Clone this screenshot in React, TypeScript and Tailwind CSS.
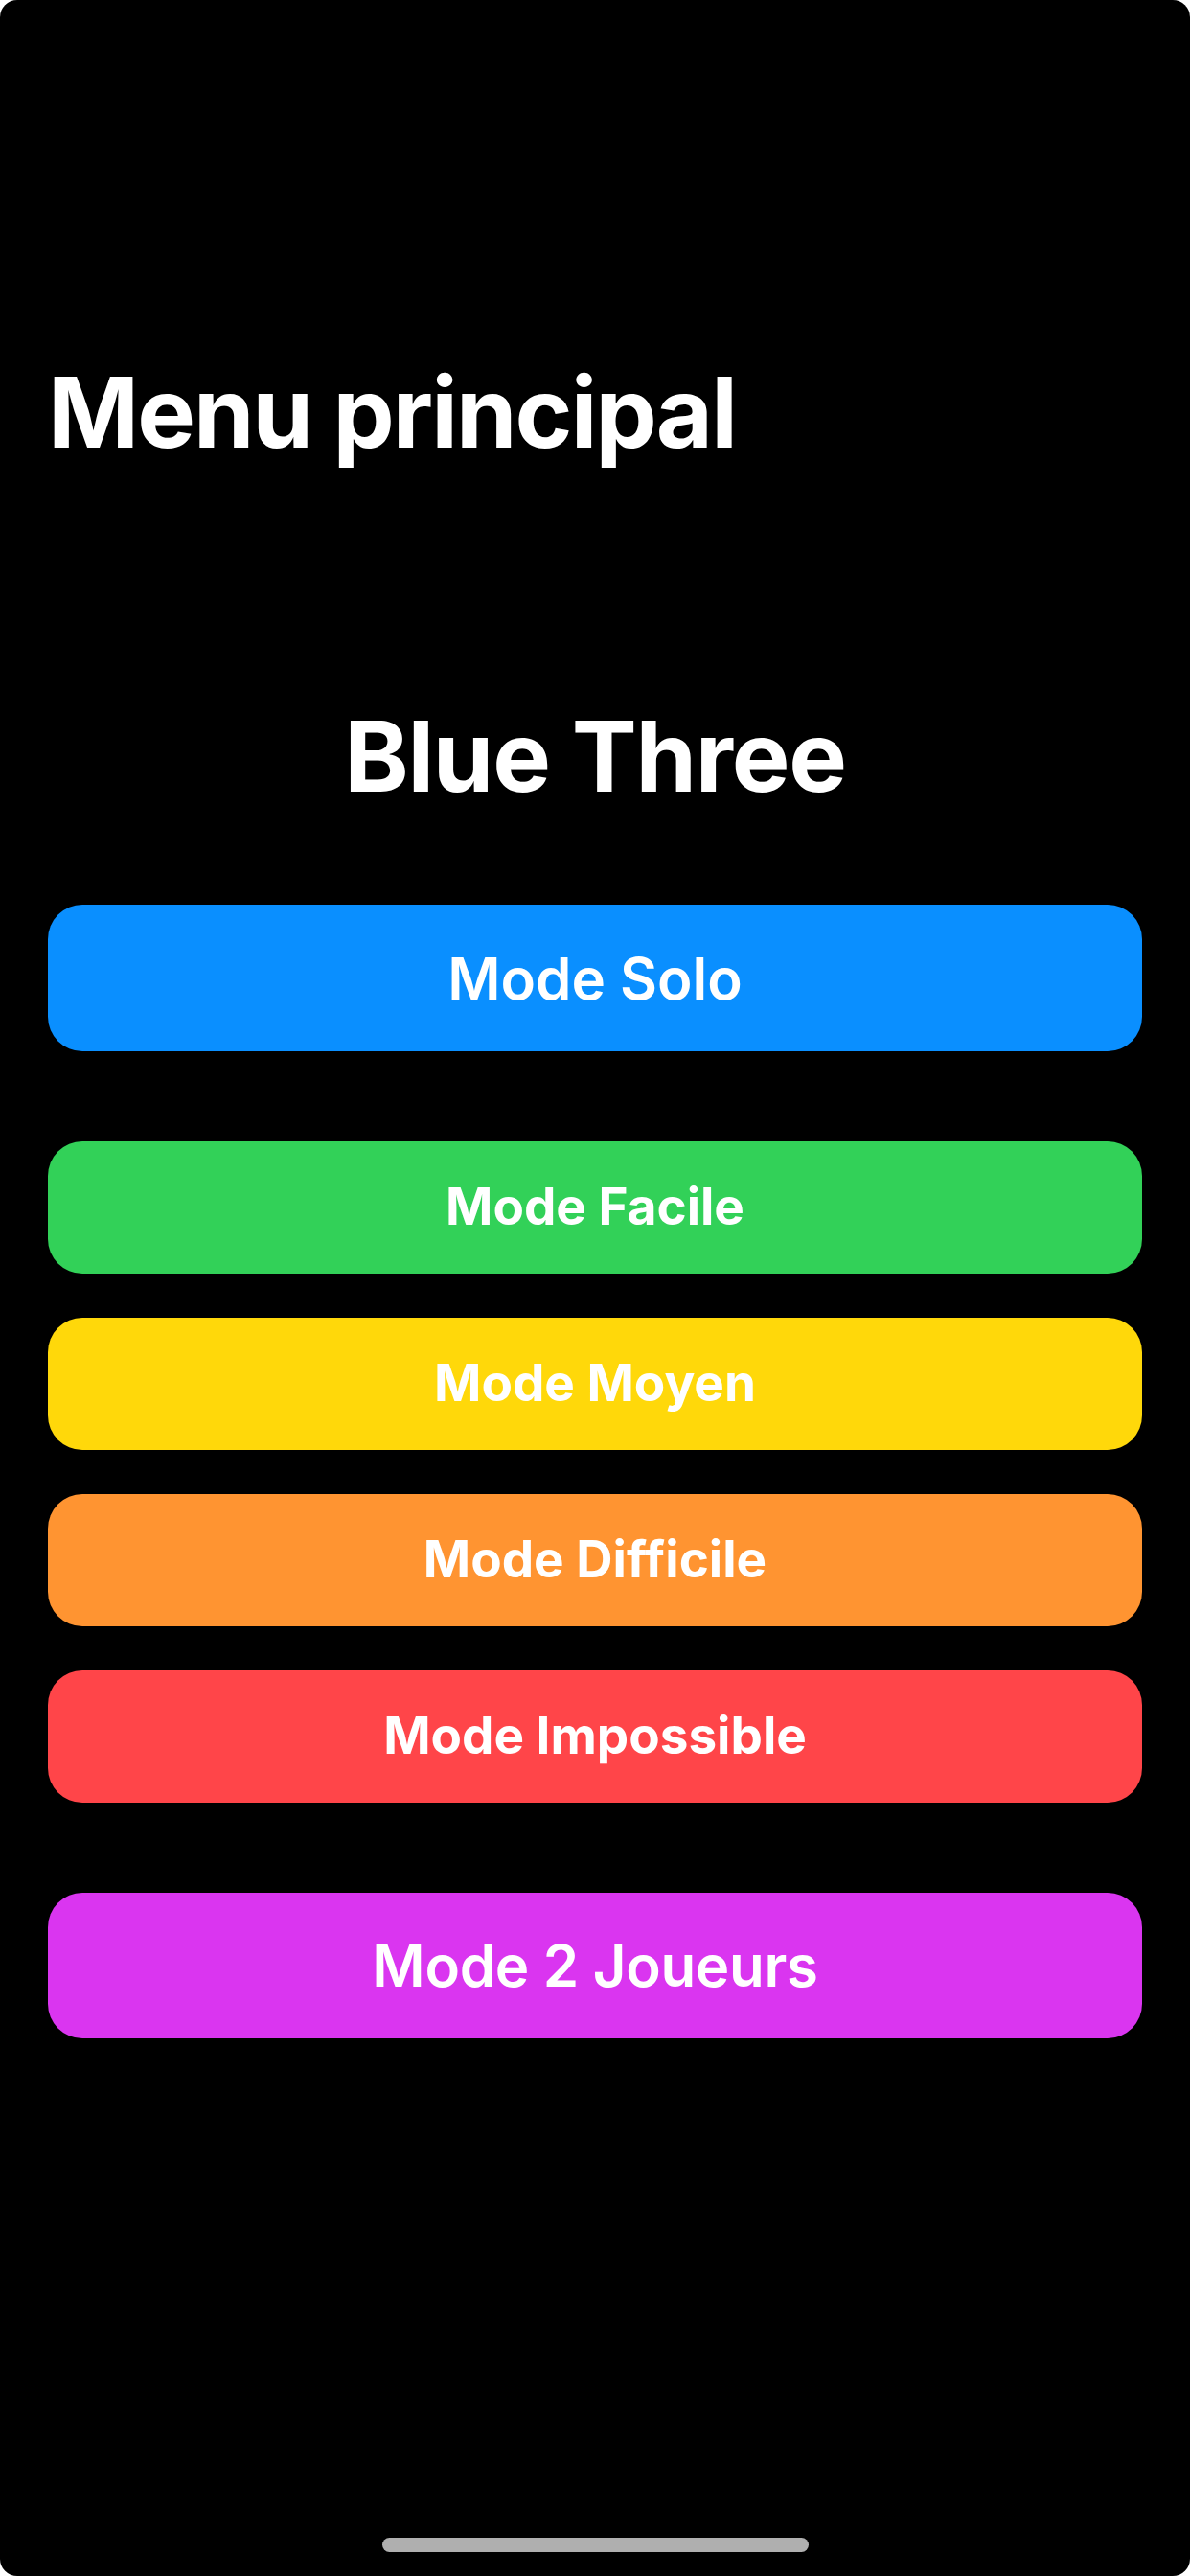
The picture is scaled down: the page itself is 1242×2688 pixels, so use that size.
import React from "react";

const font = { fontFamily: '"Inter", "Noto Sans", "Liberation Sans", sans-serif' };

function Btn({ label, cls }: { label: string; cls: string }) {
  return (
    <button className={`w-full flex items-center justify-center rounded-[36px] text-white ${cls}`}>
      {label}
    </button>
  );
}

export default function App() {
  return (
    <div className="w-[1242px] h-[2688px] bg-white" style={font}>
      <div className="w-full h-full bg-black rounded-[18px] flex flex-col px-[50px] pt-[379px] pb-[25px]">
        <h1 className="text-[102px] leading-[102px] font-bold text-white tracking-[-1.9px]">Menu principal</h1>
        <h2 className="mt-[257px] text-center text-[102px] leading-[102px] font-bold text-white tracking-[-1.2px]">Blue Three</h2>
        <div className="mt-[104px] flex flex-col">
          <Btn label="Mode Solo" cls="h-[153px] bg-[#0A8FFF] text-[60px] font-semibold" />
        </div>
        <div className="mt-[94px] flex flex-col gap-[46px]">
          <Btn label="Mode Facile" cls="h-[138px] bg-[#32D158] text-[53px] font-bold" />
          <Btn label="Mode Moyen" cls="h-[138px] bg-[#FFD80A] text-[53px] font-bold" />
          <Btn label="Mode Difficile" cls="h-[138px] bg-[#FF9431] text-[53px] font-bold" />
          <Btn label="Mode Impossible" cls="h-[138px] bg-[#FF4549] text-[53px] font-bold" />
        </div>
        <div className="mt-[94px] flex flex-col">
          <Btn label="Mode 2 Joueurs" cls="h-[152px] bg-[#DA35F0] text-[60px] font-semibold tracking-[-0.3px]" />
        </div>
        <div className="mt-auto flex justify-center">
          <div className="w-[445px] h-[15px] rounded-full bg-[#AFAFAF]" />
        </div>
      </div>
    </div>
  );
}
